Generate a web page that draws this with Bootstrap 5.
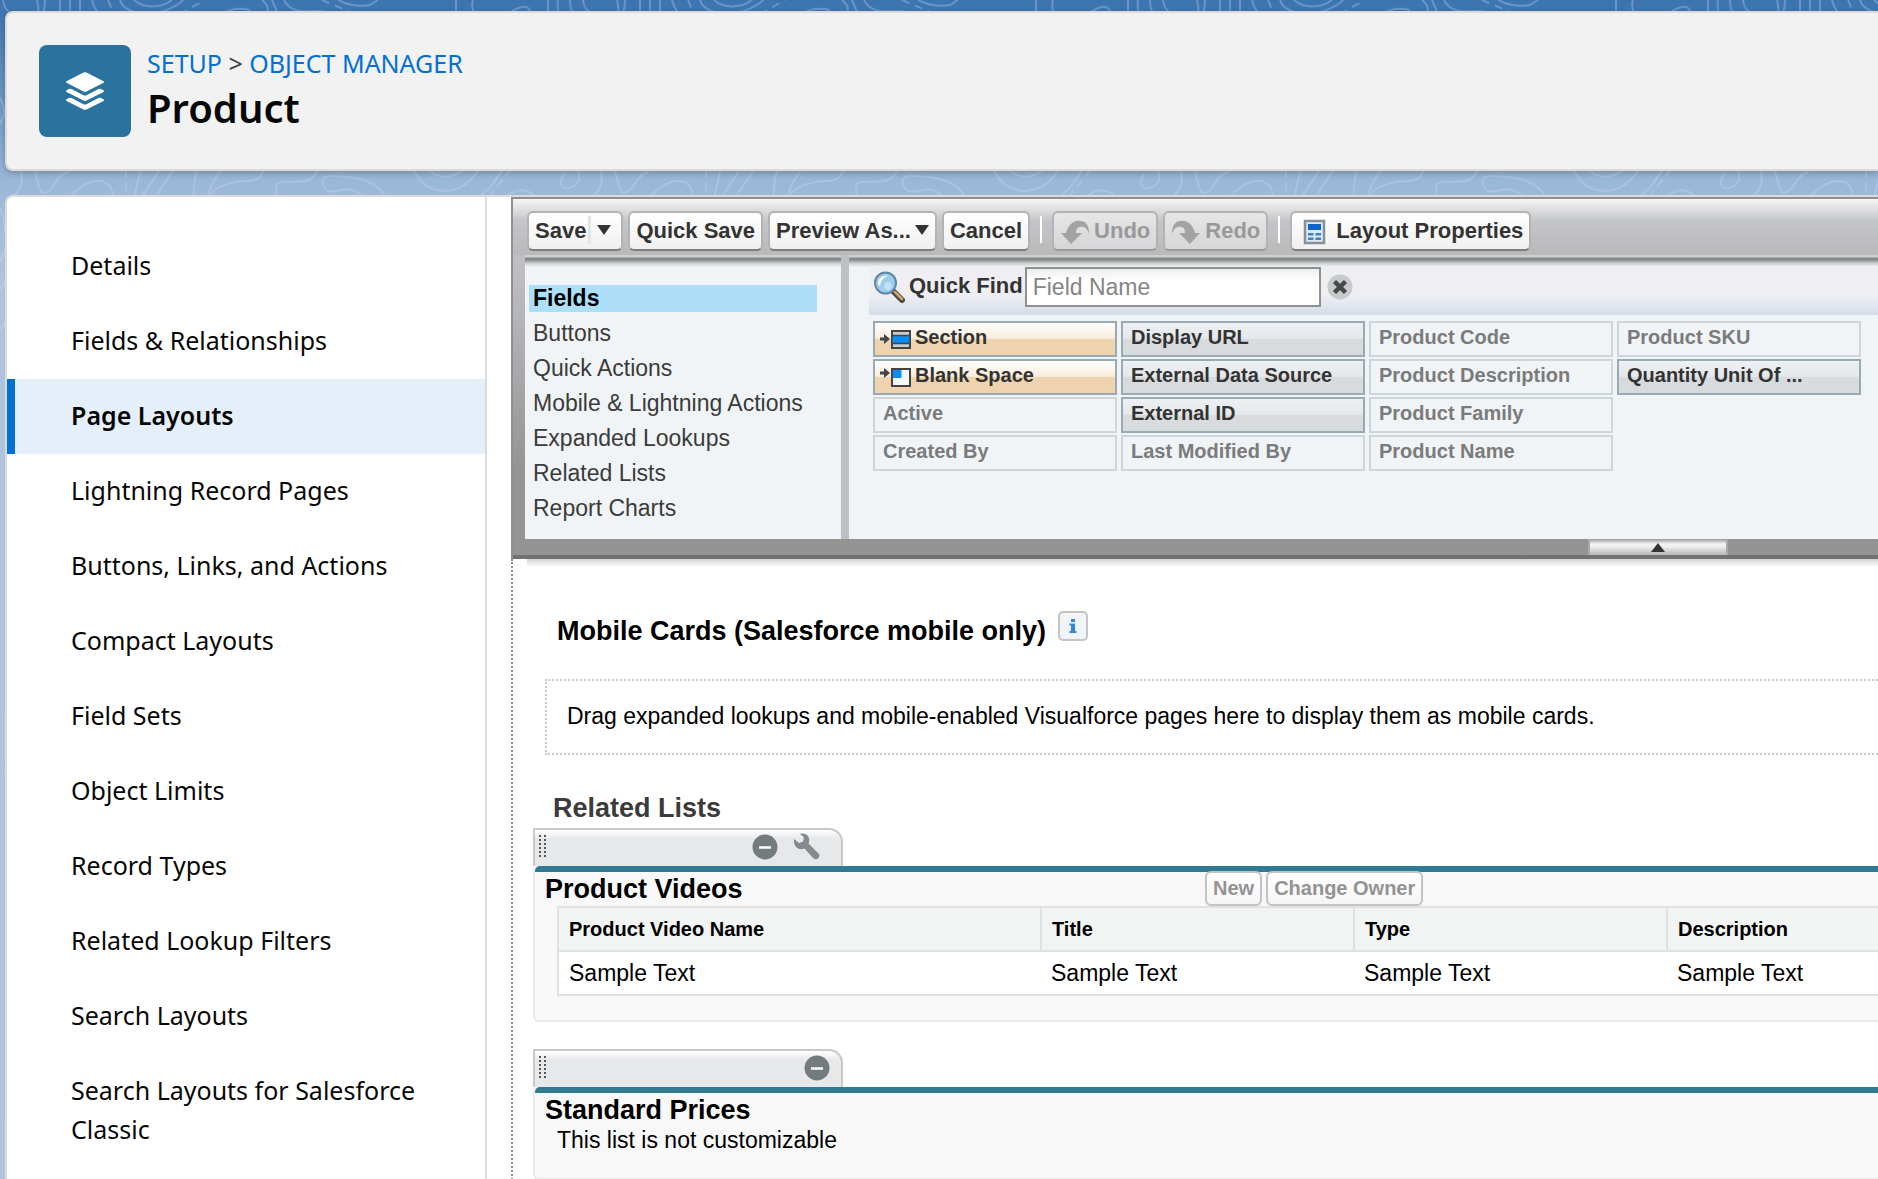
<!DOCTYPE html>
<html lang="en">
<head>
<meta charset="utf-8">
<meta name="viewport" content="width=device-width, initial-scale=1">
<title>Product | Object Manager</title>
<link href="https://cdn.jsdelivr.net/npm/bootstrap@5.3.0/dist/css/bootstrap.min.css" rel="stylesheet">
<style>
  body { font-family: "Liberation Sans", Arial, sans-serif; font-size: 23px; line-height: 27px; color: #000;
    background: linear-gradient(#3b75b0 0, #4179b2 16px, #9ab7d8 180px, #aec3df 280px, #b0c4df 100%); overflow-x: hidden; }
  .backdrop { position: absolute; inset: 0; width: 100%; height: 100%; z-index: -1; }
  .shell { min-height: 100vh; padding: 11px 0 0 5px; gap: 24px; }

  .setup-head { font-family: "Noto Sans", "Open Sans", sans-serif; background: #f2f2f2; border: 2px solid #dddbda; border-right: 0;
    border-radius: 8px 0 0 8px; height: 160px; padding: 32px; gap: 16px; box-shadow: 0 2px 6px rgba(0,0,0,.25); }
  .obj-icon { width: 92px; height: 92px; border-radius: 8px; background: #2a739e; }
  .crumbs { font-size: 25px; line-height: 36px; color: #3e3e3c; }
  .crumbs a { color: #0070d2; text-decoration: none; }
  .setup-head h1 { font-size: 40px; line-height: 50px; font-weight: 600; color: #080707; margin: 2px 0 0; }

  .setup-body { background: #fff; border: 2px solid #dddbda; border-right: 0; border-bottom: 0; border-radius: 8px 0 0 0; }
  .side-nav { flex: 0 0 480px; border-right: 2px solid #dddbda; padding-top: 32px; font-family: "Noto Sans", "Open Sans", sans-serif; font-size: 25px; }
  .side-nav .nav-link { color: #080707; padding: 17px 48px 19px 64px; line-height: 39px; }
  .side-nav .nav-link.active { font-weight: 600; background: #e5effa; box-shadow: inset 8px 0 0 #0070d2; }

  .editor { margin-left: 24px; min-width: 0; }
  .palette-panel { border: solid #948d8f; border-width: 2px 0 0 2px; padding-left: 12px;
    background: linear-gradient(#f4f4f4 0, #c4c5c8 22px, #bdbdc1 80px, #949494 270px); }
  .tools { height: 56px; gap: 5px; margin-left: -12px; padding: 12px 0 0 14px;
    background: linear-gradient(#f6f6f6 0, #c4c5c8 22px, #b9b9bb 100%); }
  .tool-btn { height: 40px; border: 2px solid #b3b3b3; border-bottom-color: #7d7d7d; border-radius: 6px; padding: 0 6px 2px;
    background: linear-gradient(#fff, #f0f0f0); color: #333; font-weight: 700; font-size: 22px; line-height: 27px; white-space: nowrap; }
  .tool-btn:disabled { background: linear-gradient(#e6e6e7, #d6d6d8); color: #999; border-color: #b3b3b3; border-bottom-color: #9a9a9a; }
  .tool-rule { width: 2px; height: 27px; background: #fff; margin: 5px 5px 0; }
  .split { width: 3px; height: 28px; background: #dfe4e6; margin: 0 4px 0 2px; }
  .panes { gap: 8px; background: #bfc0c5; height: 284px; }
  .pane { background: linear-gradient(#d0d0d0 0, #d0d0d0 2px, #858788 3px, #8a8c8d 5px, #c9cccd 8px, #f0f4f7 12px) #f0f4f7; }
  .kind-pane { flex: 0 0 316px; padding: 30px 24px 0 4px; }
  .kind-pane .list-group { gap: 8px; border-radius: 0; }
  .kind-pane .list-group-item { border: 0; border-radius: 0; background: none; padding: 0 4px; color: #3b3b3b; }
  .kind-pane .list-group-item.active { background: #aedff8; color: #000; font-weight: 700; margin: 0; }
  .field-pane { padding: 12px 0 0 20px; min-width: 0; }
  .finder { height: 48px; padding-left: 4px; background: linear-gradient(#eeeef3 60%, #d5dde9); color: #333; }
  .finder label { font-weight: 700; font-size: 22px; line-height: 37px; margin-right: 2px; }
  .finder input { width: 296px; height: 40px; border: 2px solid #8f9090; border-radius: 0; padding: 0 6px; font-size: 23px;
    background: linear-gradient(#eee 0, #fff 12px); }
  .finder input::placeholder { color: #858585; opacity: 1; }
  .finder .plain-btn { height: 40px; }
  .plain-btn { border: 0; background: none; padding: 0; line-height: 0; }
  .field-grid { display: grid; grid-template-rows: repeat(4, 36px); grid-auto-columns: 244px; grid-auto-flow: column; gap: 2px 4px; margin: 6px 0 0 4px; padding: 0; list-style: none; }
  .field-grid li { border: 2px solid #ced6d9; color: #7b7b7b; font-weight: 700; font-size: 20px; line-height: 28px; padding: 0 8px; white-space: nowrap; overflow: hidden; }
  .field-grid .free { border-color: #9aaab3; color: #333; background: linear-gradient(#edf1f4 0, #e4e8eb 48%, #d8dbde 52%); }
  .field-grid .special { border-color: #9aaab3; color: #333; background: linear-gradient(#fff 0, #f9ecdb 48%, #eed3ae 52%); padding: 0 4px; }
  .grip-bar { height: 20px; margin-left: -12px; background: #949494; border-bottom: 4px solid #727272; padding-right: 150px; }
  .grip-bar button { width: 140px; height: 16px; background: linear-gradient(#999 0, #f4f4f4 5px, #ececec 8px, #b5b5b5); border: solid #aaa; border-width: 0 2px; }
  .drop-shade { height: 7px; margin-left: -6px; background: linear-gradient(#d4d4d4, #f6f6f6); }

  .canvas { border-left: 2px dotted #8c8c8c; padding: 0 0 0 20px; }
  .sheet-title { font-size: 27px; line-height: 32px; font-weight: 700; margin: 0; }
  .mobile-head { padding: 45px 0 0 24px; gap: 12px; }
  .drop-zone { margin: 32px 0 0 12px; border: 2px dotted #c8c8c8; border-right: 0; padding: 22px 20px 23px; }
  .lists-title { margin: 37px 0 4px 20px; color: #3b3b3b; }
  .tab-bar { width: 310px; height: 38px; border: 2px solid #c9c9c9; border-bottom: 0; border-radius: 0 14px 0 0; background: linear-gradient(#fff 0, #e7e8ea 9px); padding: 0 21px 3px 4px; gap: 15px; }
  .tab-bar.single { padding-right: 11px; }
  .list-box { background: #f8f8f8; border: solid #e9e9e9; border-width: 0 0 2px 2px; border-radius: 5px 0 0 6px; }
  .list-box::before { content: ""; display: block; height: 6px; background: #307a94; border-radius: 5px 0 0 0; }
  .box-head { height: 34px; padding-left: 10px; gap: 4px; }
  .box-head .sheet-title { width: 656px; line-height: 34px; }
  .mini-btn { height: 35px; margin-top: -1px; border: 2px solid #c3c3c3; border-radius: 6px; background: linear-gradient(#fff, #f5f5f5); padding: 0 6px; font-size: 20px; line-height: 27px; font-weight: 700; }
  .mini-btn:disabled { color: #939393; }
  .sample-table { table-layout: fixed; border: solid #dfe1e5; border-width: 2px 0 2px 2px; margin: 0; }
  .sample-table th, .sample-table td { padding: 7px 10px; line-height: 28px; color: #000; }
  .sample-table th { font-size: 20px; background: #f2f3f3; border-bottom: 2px solid #dfe1e5; border-left: 2px solid #dfe1e5; }
  .sample-table td { background: #fff; border: 0; }
  .sample-table th:first-child { border-left: 0; }
  .table-wrap { margin-left: 22px; }
  .list-note { margin: 0 0 0 22px; }
  .second-list { margin-top: 27px; }
</style>
</head>
<body>
<svg class="backdrop" aria-hidden="true">
  <defs>
    <pattern id="contours" width="580" height="1400" patternUnits="userSpaceOnUse">
      <g fill="none" stroke="#d5dcf5" stroke-opacity=".3" stroke-width="2">
        <path d="M3 0q1 8 6 12M37 0q2 8 1 14M45 0q0 8-2 14M60 0v14M70 0v12M80 0v12M92 0q2 8 7 14M120 0c4 14 28 16 44 11q14-5 20-12M134 0c10 9 28 8 38 0M222 14q12-8 28-4M262 0q8 6 5 14M272 0l6 14M284 0c6 12 18 12 32 11q12 0 16 4M338 0q16 8 32 5l8-5M456 0v13M474 14q-3-8-1-14M508 14q14-10 20-6 3 2 1 6M548 0v12M558 0q-1 8 1 14M570 0q0 8 3 14"/>
        <path stroke-dasharray="8 6" d="M180 14l25-14M322 0l28 12M108 0l6 14"/>
        <path d="M20 168c4 12 1 24-9 29M34 168c4 12 4 20 8 24 8 4 12-10 20-17q8-4 11-8M69 198c8-9 18-18 32-17 9 2 12 10 12 17M141 168l-7 30M161 168l-20 30M175 168l-20 30M198 168q-5 14-4 30M223 168c-8 10-14 18-15 30M264 168c-4 16-14 12-28 14q-22 4-28 16M318 168c-4 14-14 14-28 14-16-1-15 2-13 16M325 189c-6-10-1-14 10-13 24 1 42 5 51 22M325 189c10 8 24-8 38 8M412 168c8 14 16 22 32 23 16 0 28-10 36-23M428 168c8 11 26 12 36 0M478 198c4-4 14-10 20-22l6-8M505 198c8-8 18-10 26-5l6 5M564 174c-6 10-2 15 4 14 12-2 14-12 8-20"/>
        <path stroke-dasharray="9 5" d="M126 168v30M488 198l24-30"/>
        <path d="M0 98q5 8 4 18l-4 8M0 208q5 10 5 24M0 262l6-14M0 290l6-10M0 330l6-8"/>
      </g>
    </pattern>
  </defs>
  <rect width="100%" height="100%" fill="url(#contours)"/>
</svg>

<div class="shell d-flex flex-column">
  <header class="setup-head d-flex">
    <div class="obj-icon d-flex align-items-center justify-content-center flex-shrink-0">
      <svg width="40" height="40" viewBox="0 0 40 40" fill="#fff" aria-hidden="true">
        <path d="M1.500 10.200 18.500 1.600q1.500-.7 3 0l17 8.600q1.200.8 0 1.600l-17 8.800q-1.500.7-3 0l-17-8.800q-1.200-.8 0-1.600z"/>
        <path d="M1.500 19.300l2.500-1.300q1.500-.6 3 .2l11.500 6q1.500.7 3 0l11.500-6q1.500-.8 3-.2l2.500 1.300q1.200.8 0 1.600l-17 8.600q-1.500.7-3 0l-17-8.600q-1.200-.8 0-1.600z"/>
        <path d="M1.500 28.300l2.500-1.300q1.500-.6 3 .2l11.500 6q1.500.7 3 0l11.500-6q1.500-.8 3-.2l2.500 1.300q1.200.8 0 1.600l-17 8.600q-1.500.7-3 0l-17-8.600q-1.200-.8 0-1.600z"/>
      </svg>
    </div>
    <div>
      <nav class="crumbs" aria-label="Breadcrumb"><a href="#">SETUP</a> &gt; <a href="#">OBJECT MANAGER</a></nav>
      <h1>Product</h1>
    </div>
  </header>

  <div class="setup-body d-flex flex-grow-1">
    <nav class="side-nav nav flex-column flex-nowrap" aria-label="Object settings">
      <a class="nav-link" href="#">Details</a>
      <a class="nav-link" href="#">Fields &amp; Relationships</a>
      <a class="nav-link active" aria-current="page" href="#">Page Layouts</a>
      <a class="nav-link" href="#">Lightning Record Pages</a>
      <a class="nav-link" href="#">Buttons, Links, and Actions</a>
      <a class="nav-link" href="#">Compact Layouts</a>
      <a class="nav-link" href="#">Field Sets</a>
      <a class="nav-link" href="#">Object Limits</a>
      <a class="nav-link" href="#">Record Types</a>
      <a class="nav-link" href="#">Related Lookup Filters</a>
      <a class="nav-link" href="#">Search Layouts</a>
      <a class="nav-link" href="#">Search Layouts for Salesforce Classic</a>
    </nav>

    <main class="editor d-flex flex-column flex-grow-1">
      <section class="palette-panel">
        <div class="tools d-flex align-items-start">
          <button type="button" class="tool-btn d-flex align-items-center">Save<span class="split"></span><svg width="20" height="10" viewBox="0 0 20 10" aria-hidden="true"><path d="M2 0h14L9 10z" fill="#333"/></svg></button>
          <button type="button" class="tool-btn">Quick Save</button>
          <button type="button" class="tool-btn d-flex align-items-center">Preview As...<svg class="ms-1" width="14" height="10" viewBox="0 0 14 10" aria-hidden="true"><path d="M0 0h14L7 10z" fill="#333"/></svg></button>
          <button type="button" class="tool-btn">Cancel</button>
          <span class="tool-rule"></span>
          <button type="button" class="tool-btn d-flex align-items-center" disabled><svg class="me-1 mt-1" width="30" height="24" viewBox="0 0 30 24" aria-hidden="true"><path d="M11 24 1 13h5C8 5 14 0 20 1c6 0 9 4 9 13-2-6-5-8-9-7-3 0-4 3-4 6h6z" fill="#a3a3a3"/></svg>Undo</button>
          <button type="button" class="tool-btn d-flex align-items-center" disabled><svg class="me-1 mt-1" width="30" height="24" viewBox="0 0 30 24" aria-hidden="true"><path d="M19 24l10-11h-5C22 5 16 0 10 1 4 1 1 5 1 14c2-6 5-8 9-7 3 0 4 3 4 6H8z" fill="#a3a3a3"/></svg>Redo</button>
          <span class="tool-rule"></span>
          <button type="button" class="tool-btn d-flex align-items-center"><svg class="ms-1 me-2 mt-1" width="26" height="26" viewBox="0 0 26 26" aria-hidden="true"><path d="M3 2h19v22H3z" fill="#d9eafa" stroke="#8b8f94" stroke-width="2.500"/><path d="M6 5h13v6H6z" fill="#1064c8"/><path d="M6 14h5.500v2.500H6zm7.500 0H19v2.500h-5.500zM6 18.500h5.500V21H6zm7.500 0H19V21h-5.500z" fill="#3f7fc4"/></svg>Layout Properties</button>
        </div>
        <div class="panes d-flex">
          <div class="pane kind-pane">
            <div class="list-group">
              <a class="list-group-item active" href="#">Fields</a>
              <a class="list-group-item" href="#">Buttons</a>
              <a class="list-group-item" href="#">Quick Actions</a>
              <a class="list-group-item" href="#">Mobile &amp; Lightning Actions</a>
              <a class="list-group-item" href="#">Expanded Lookups</a>
              <a class="list-group-item" href="#">Related Lists</a>
              <a class="list-group-item" href="#">Report Charts</a>
            </div>
          </div>
          <div class="pane field-pane flex-grow-1">
            <div class="finder d-flex">
              <svg class="mt-1 me-1" width="32" height="32" viewBox="0 0 32 32" aria-hidden="true"><path d="M20 20l9 9" stroke="#4a4a4a" stroke-width="6" stroke-linecap="round"/><path d="M22 21l7 7" stroke="#d9a468" stroke-width="2.500" stroke-linecap="round"/><circle cx="12.500" cy="12" r="10.500" fill="#9ccdec" stroke="#5f87a3" stroke-width="2"/><path d="M5 13c0-6 5-9 10-8-5 2-7 4-8 10z" fill="#fff"/><circle cx="15" cy="15" r="4" fill="#bfe2f6"/></svg>
              <label for="quickFind">Quick Find</label>
              <input id="quickFind" type="text" placeholder="Field Name">
              <button type="button" class="plain-btn ms-1" aria-label="Clear"><svg width="30" height="26" viewBox="0 0 30 26"><circle cx="15" cy="13" r="12.500" fill="#c6cacb"/><path d="M9.500 7.500l11 11m0-11l-11 11" stroke="#484848" stroke-width="4.500"/></svg></button>
            </div>
            <ul class="field-grid">
              <li class="special"><svg class="me-1" width="32" height="20" viewBox="0 0 32 20" aria-hidden="true"><path d="M1 10h6" stroke="#444" stroke-width="3"/><path d="M5 5l6 5-6 5z" fill="#444"/><path d="M13 2h18v17H13z" fill="#c9cdd0" stroke="#444" stroke-width="2"/><path d="M13 6.500h18v8H13z" fill="#0a8df5" stroke="#444" stroke-width="1.500"/></svg>Section</li>
              <li class="special"><svg class="me-1" width="32" height="20" viewBox="0 0 32 20" aria-hidden="true"><path d="M1 6h6" stroke="#444" stroke-width="3"/><path d="M5 1l6 5-6 5z" fill="#444"/><path d="M13 2h18v17H13z" fill="#f4f7f9" stroke="#444" stroke-width="2"/><path d="M14 3h8.500v8H14z" fill="#0a8df5"/></svg>Blank Space</li>
              <li>Active</li>
              <li>Created By</li>
              <li class="free">Display URL</li>
              <li class="free">External Data Source</li>
              <li class="free">External ID</li>
              <li>Last Modified By</li>
              <li>Product Code</li>
              <li>Product Description</li>
              <li>Product Family</li>
              <li>Product Name</li>
              <li>Product SKU</li>
              <li class="free">Quantity Unit Of ...</li>
            </ul>
          </div>
        </div>
        <div class="grip-bar d-flex justify-content-end">
          <button type="button" class="plain-btn" aria-label="Collapse palette"><svg width="16" height="9" viewBox="0 0 16 9"><path d="M1 9h14L8 0z" fill="#333"/></svg></button>
        </div>
      </section>

      <section class="canvas flex-grow-1">
        <div class="drop-shade"></div>
        <div class="mobile-head d-flex">
          <h2 class="sheet-title pt-1">Mobile Cards (Salesforce mobile only)</h2>
          <button type="button" class="plain-btn align-self-start" aria-label="Information"><svg width="30" height="30" viewBox="0 0 30 30"><rect x="1" y="1" width="28" height="28" rx="4" fill="#f1f4f8" stroke="#c4c4c4" stroke-width="2"/><path d="M13 8h4v3h-4zM11.500 12.500H17V20h1.500v2h-7v-2H13v-5.500h-1.500z" fill="#3487de"/></svg></button>
        </div>
        <div class="drop-zone">Drag expanded lookups and mobile-enabled Visualforce pages here to display them as mobile cards.</div>

        <h2 class="sheet-title lists-title">Related Lists</h2>

        <article>
          <div class="tab-bar d-flex align-items-center">
            <svg class="me-auto" width="7" height="24" viewBox="0 0 7 24" aria-hidden="true"><path d="M1 0v24M6 0v24" stroke="#555" stroke-width="2" stroke-dasharray="2 2"/></svg>
            <button type="button" class="plain-btn" aria-label="Remove list"><svg width="26" height="26" viewBox="0 0 26 26"><circle cx="13" cy="13" r="12.500" fill="#737b7f"/><path d="M7 13.500h12" stroke="#fff" stroke-width="2.500"/></svg></button>
            <button type="button" class="plain-btn" aria-label="List properties"><svg width="27" height="27" viewBox="0 0 27 27"><path d="M1 6l5 4 4-1.500 1-4L7 1c7-2 11 4 8.500 9.500L26 21c2 4-3 7-6 4L11.500 15.500C5 18 0 13 1 6z" fill="#838b90"/></svg></button>
          </div>
          <div class="list-box pb-4">
            <div class="box-head d-flex align-items-start">
              <h3 class="sheet-title">Product Videos</h3>
              <button type="button" class="mini-btn" disabled>New</button>
              <button type="button" class="mini-btn" disabled>Change Owner</button>
            </div>
            <div class="table-wrap">
              <table class="table sample-table">
                <colgroup><col style="width:483px"><col style="width:313px"><col style="width:313px"><col></colgroup>
                <thead><tr><th scope="col">Product Video Name</th><th scope="col">Title</th><th scope="col">Type</th><th scope="col">Description</th></tr></thead>
                <tbody><tr><td>Sample Text</td><td>Sample Text</td><td>Sample Text</td><td>Sample Text</td></tr></tbody>
              </table>
            </div>
          </div>
        </article>

        <article class="second-list">
          <div class="tab-bar single d-flex align-items-center">
            <svg class="me-auto" width="7" height="24" viewBox="0 0 7 24" aria-hidden="true"><path d="M1 0v24M6 0v24" stroke="#555" stroke-width="2" stroke-dasharray="2 2"/></svg>
            <button type="button" class="plain-btn" aria-label="Remove list"><svg width="26" height="26" viewBox="0 0 26 26"><circle cx="13" cy="13" r="12.500" fill="#737b7f"/><path d="M7 13.500h12" stroke="#fff" stroke-width="2.500"/></svg></button>
          </div>
          <div class="list-box pb-4">
            <div class="box-head d-flex align-items-start"><h3 class="sheet-title">Standard Prices</h3></div>
            <p class="list-note">This list is not customizable</p>
          </div>
        </article>
      </section>
    </main>
  </div>
</div>
<script src="https://cdn.jsdelivr.net/npm/bootstrap@5.3.0/dist/js/bootstrap.bundle.min.js"></script>
</body>
</html>
